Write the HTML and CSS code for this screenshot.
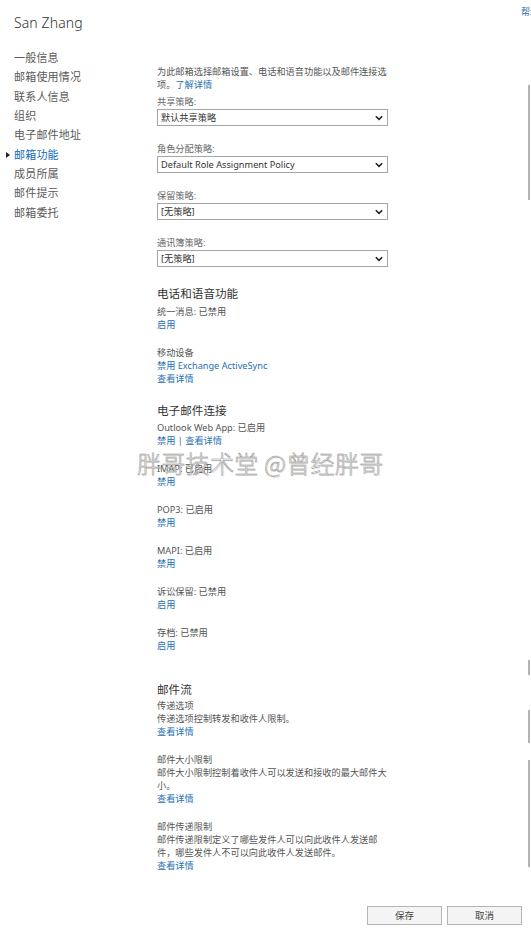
FILE: index.html
```html
<!DOCTYPE html>
<html lang="zh-CN">
<head>
<meta charset="utf-8">
<title>San Zhang - 邮箱功能</title>
<link rel="stylesheet" href="styles.css">
</head>
<body>
<div class="page">
  <header class="top">
    <h1 class="name">San Zhang</h1>
    <a class="help">帮助</a>
  </header>
  <div class="main">
    <nav class="nav">
      <a class="nav-item">一般信息</a>
      <a class="nav-item">邮箱使用情况</a>
      <a class="nav-item">联系人信息</a>
      <a class="nav-item">组织</a>
      <a class="nav-item">电子邮件地址</a>
      <a class="nav-item active">邮箱功能</a>
      <a class="nav-item">成员所属</a>
      <a class="nav-item">邮件提示</a>
      <a class="nav-item">邮箱委托</a>
    </nav>
    <section class="content">
      <p class="intro">为此邮箱选择邮箱设置、电话和语音功能以及邮件连接选项。<a class="link">了解详情</a></p>

      <div class="field">
        <div class="label">共享策略:</div>
        <div class="select"><span>默认共享策略</span><svg class="chev" width="8" height="6" viewBox="0 0 8 6"><path d="M0.8 1.2 L4 4.4 L7.2 1.2" fill="none" stroke="#222" stroke-width="1.6"/></svg></div>
      </div>
      <div class="field">
        <div class="label">角色分配策略:</div>
        <div class="select"><span>Default Role Assignment Policy</span><svg class="chev" width="8" height="6" viewBox="0 0 8 6"><path d="M0.8 1.2 L4 4.4 L7.2 1.2" fill="none" stroke="#222" stroke-width="1.6"/></svg></div>
      </div>
      <div class="field">
        <div class="label">保留策略:</div>
        <div class="select"><span>[无策略]</span><svg class="chev" width="8" height="6" viewBox="0 0 8 6"><path d="M0.8 1.2 L4 4.4 L7.2 1.2" fill="none" stroke="#222" stroke-width="1.6"/></svg></div>
      </div>
      <div class="field">
        <div class="label">通讯簿策略:</div>
        <div class="select"><span>[无策略]</span><svg class="chev" width="8" height="6" viewBox="0 0 8 6"><path d="M0.8 1.2 L4 4.4 L7.2 1.2" fill="none" stroke="#222" stroke-width="1.6"/></svg></div>
      </div>

      <h2 class="heading first">电话和语音功能</h2>
      <div class="group">
        <div class="line">统一消息: 已禁用</div>
        <a class="line link">启用</a>
      </div>
      <div class="group">
        <div class="line">移动设备</div>
        <a class="line link">禁用 Exchange ActiveSync</a>
        <a class="line link">查看详情</a>
      </div>

      <h2 class="heading">电子邮件连接</h2>
      <div class="group">
        <div class="line">Outlook Web App: 已启用</div>
        <div class="line"><a class="link">禁用</a> <span class="sep">|</span> <a class="link">查看详情</a></div>
      </div>
      <div class="group">
        <div class="line">IMAP: 已启用</div>
        <a class="line link">禁用</a>
      </div>
      <div class="group">
        <div class="line">POP3: 已启用</div>
        <a class="line link">禁用</a>
      </div>
      <div class="group">
        <div class="line">MAPI: 已启用</div>
        <a class="line link">禁用</a>
      </div>
      <div class="group">
        <div class="line">诉讼保留: 已禁用</div>
        <a class="line link">启用</a>
      </div>
      <div class="group">
        <div class="line">存档: 已禁用</div>
        <a class="line link">启用</a>
      </div>

      <h2 class="heading flow">邮件流</h2>
      <div class="group">
        <div class="line">传递选项</div>
        <div class="line">传递选项控制转发和收件人限制。</div>
        <a class="line link">查看详情</a>
      </div>
      <div class="group">
        <div class="line">邮件大小限制</div>
        <div class="line wrap">邮件大小限制控制着收件人可以发送和接收的最大邮件大小。</div>
        <a class="line link">查看详情</a>
      </div>
      <div class="group">
        <div class="line">邮件传递限制</div>
        <div class="line wrap">邮件传递限制定义了哪些发件人可以向此收件人发送邮件，哪些发件人不可以向此收件人发送邮件。</div>
        <a class="line link">查看详情</a>
      </div>
    </section>
  </div>
  <footer class="actions">
    <button class="btn">保存</button>
    <button class="btn">取消</button>
  </footer>
  <div class="scroll">
    <span class="seg s1"></span>
    <span class="seg s2"></span>
    <span class="seg s3"></span>
    <span class="seg s4"></span>
  </div>
  <div class="watermark">胖哥技术堂 @曾经胖哥</div>
</div>
</body>
</html>
```

FILE: styles.css
```css
html, body {
  margin: 0;
  padding: 0;
  background: #fff;
  overflow: hidden;
}

body {
  font-family: "Noto Sans", "Noto Sans CJK SC", sans-serif;
  color: #555;
}

.page {
  position: relative;
  width: 531px;
  height: 931px;
  display: flex;
  flex-direction: column;
  overflow: hidden;
}

.top {
  display: flex;
  justify-content: space-between;
  align-items: flex-start;
  height: 40px;
  padding-left: 14px;
  box-sizing: border-box;
}

.name {
  margin: 14px 0 0;
  font-size: 14px;
  line-height: 18px;
  font-weight: 300;
  color: #333;
  letter-spacing: 0.1px;
}

.help {
  margin-top: 6px;
  width: 10px;
  overflow: hidden;
  white-space: nowrap;
  font-size: 9px;
  line-height: 12px;
  color: #1f6fb2;
}

.main {
  flex: 1;
  display: grid;
  grid-template-columns: 157px 231px;
}

.nav {
  display: flex;
  flex-direction: column;
  padding: 8px 0 0 14px;
}

.nav-item {
  position: relative;
  font-size: 11px;
  line-height: 19.35px;
  letter-spacing: 0.2px;
  color: #5a5a5a;
  font-family: "Noto Sans CJK SC", sans-serif;
}

.nav-item.active {
  color: #0f6cb6;
}

.nav-item.active::before {
  content: "";
  position: absolute;
  left: -8px;
  top: 7px;
  border-left: 4px solid #222;
  border-top: 3px solid transparent;
  border-bottom: 3px solid transparent;
}

.content {
  padding-top: 24.5px;
  font-size: 9.2px;
  line-height: 13px;
}

.content p {
  margin: 0;
}

.intro {
  color: #555;
}

.link {
  color: #1f6fb2;
  display: inline;
}

.field {
  margin-top: 4px;
}

.field + .field {
  margin-top: 15.5px;
}

.label {
  color: #666;
  line-height: 13px;
  margin-bottom: 1.5px;
}

.select {
  display: flex;
  align-items: center;
  justify-content: space-between;
  height: 17px;
  box-sizing: border-box;
  border: 1px solid #a6a6a6;
  padding: 0 4px 0 3px;
  color: #333;
  background: #fff;
}

.chev {
  display: block;
}

.heading {
  margin: 18px 0 2.5px;
  font-size: 11.6px;
  line-height: 16px;
  font-weight: 400;
  color: #333;
}

.heading.first {
  margin-top: 19px;
}

.heading.flow {
  margin-top: 29.5px;
  margin-bottom: 1.5px;
}

.group {
  display: flex;
  flex-direction: column;
}

.group + .group {
  margin-top: 15px;
}

.line {
  display: block;
  line-height: 13px;
  color: #555;
}

.line.link {
  color: #1f6fb2;
}

.sep {
  color: #1f6fb2;
}

.actions {
  display: flex;
  justify-content: flex-end;
  gap: 5px;
  padding: 0 9px 6px 0;
}

.btn {
  width: 75px;
  height: 19px;
  padding: 0;
  border: 1px solid #b5b5b5;
  background: #f4f4f4;
  color: #444;
  font-family: "Noto Sans CJK SC", sans-serif;
  font-size: 9.5px;
  line-height: 17px;
}

.scroll {
  position: absolute;
  right: 1px;
  top: 0;
  width: 2px;
  display: flex;
  flex-direction: column;
}

.seg {
  display: block;
  width: 2px;
  background: #b3b3b3;
}

.s1 { margin-top: 85px; height: 115px; }
.s2 { margin-top: 460px; height: 15px; }
.s3 { margin-top: 35px; height: 33px; }
.s4 { margin-top: 17px; height: 107px; }

.watermark {
  position: absolute;
  left: 137px;
  top: 448px;
  font-family: "Noto Sans CJK SC", sans-serif;
  font-size: 24px;
  font-weight: 300;
  line-height: 30px;
  letter-spacing: 0.3px;
  white-space: nowrap;
  color: rgba(255, 255, 255, 0.92);
  -webkit-text-stroke: 0.5px #8f8f8f;
  text-shadow: 1px 1px 1px rgba(0, 0, 0, 0.12);
}
```
